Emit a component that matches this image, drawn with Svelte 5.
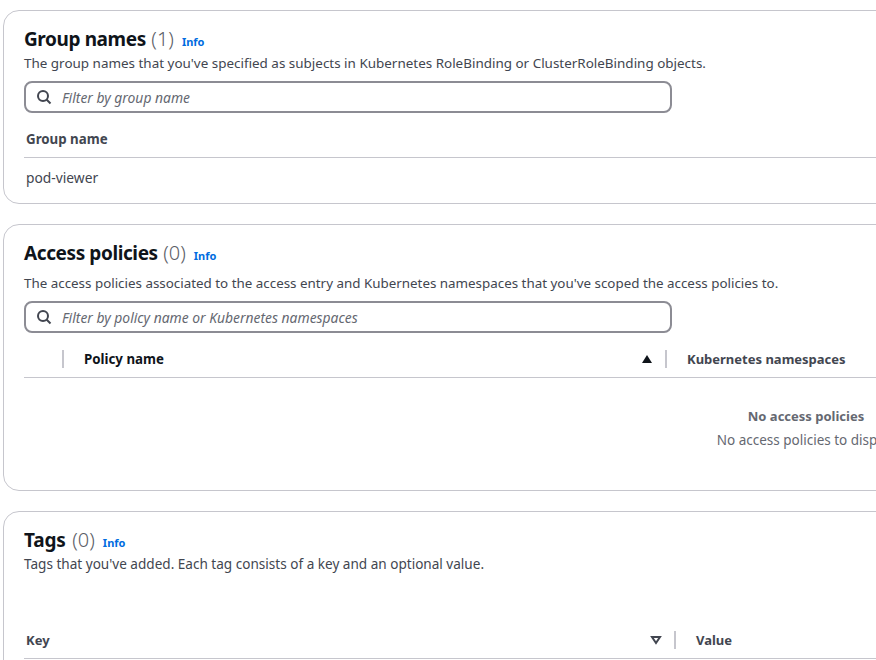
<script>
  const policyColumns = ["Policy name", "Kubernetes namespaces"];
</script>

{#snippet searchIcon()}
  <svg class="search-icon" viewBox="0 0 16 16" width="16" height="16" aria-hidden="true">
    <circle cx="7" cy="7" r="5" />
    <path d="m10.5 10.5 4 4" />
  </svg>
{/snippet}

{#snippet heading(title, count)}
  <div class="heading">
    <h2>{title} <span class="count">({count})</span></h2>
    <a href="#info" class="info">Info</a>
  </div>
{/snippet}

{#snippet filter(placeholder)}
  <div class="filter">
    {@render searchIcon()}
    <input type="text" {placeholder} />
  </div>
{/snippet}

<div class="page">
  <section class="card groups">
    {@render heading("Group names", 1)}
    <p class="desc">The group names that you've specified as subjects in Kubernetes RoleBinding or ClusterRoleBinding objects.</p>
    {@render filter("Filter by group name")}
    <div class="thead">
      <div class="th plain">Group name</div>
    </div>
    <div class="cell">pod-viewer</div>
  </section>

  <section class="card policies">
    {@render heading("Access policies", 0)}
    <p class="desc">The access policies associated to the access entry and Kubernetes namespaces that you've scoped the access policies to.</p>
    {@render filter("Filter by policy name or Kubernetes namespaces")}
    <div class="thead">
      <div class="select-col"></div>
      <div class="th policy-col">
        <span class="dark">{policyColumns[0]}</span>
        <svg class="sort" viewBox="0 0 12 10" width="12" height="10" aria-hidden="true"><path d="M6 1 11 9H1Z" /></svg>
      </div>
      <div class="th ns-col">{policyColumns[1]}</div>
    </div>
    <div class="empty">
      <strong>No access policies</strong>
      <span>No access policies to display</span>
    </div>
  </section>

  <section class="card tags">
    {@render heading("Tags", 0)}
    <p class="desc">Tags that you've added. Each tag consists of a key and an optional value.</p>
    <div class="thead spaced">
      <div class="th key-col">
        <span>Key</span>
        <svg class="sort open" viewBox="0 0 12 10" width="12" height="10" aria-hidden="true"><path d="M2 2h8L6 8Z" /></svg>
      </div>
      <div class="th value-col">Value</div>
    </div>
  </section>
</div>

<style>
  :global(body) {
    margin: 0;
    background: #fff;
  }
  .page {
    width: 876px;
    height: 660px;
    overflow: hidden;
    padding: 10px 0 0 3px;
    box-sizing: border-box;
    display: flex;
    flex-direction: column;
    gap: 20px;
    font-family: "Noto Sans", "Open Sans", sans-serif;
    font-size: 13px;
    color: #424650;
  }
  .card {
    flex: none;
    width: 1606px;
    box-sizing: border-box;
    border: 1px solid #c6c6cd;
    border-radius: 16px;
    padding: 14px 20px 0;
    background: #fff;
  }
  .groups { height: 194px; }
  .policies { height: 267px; }
  .tags { height: 300px; }
  .heading {
    display: flex;
    align-items: baseline;
    gap: 8px;
    height: 28px;
  }
  h2 {
    margin: 0;
    font-size: 19px;
    line-height: 28px;
    font-weight: 700;
    color: #0f141a;
    letter-spacing: -0.4px;
  }
  .tags h2 { letter-spacing: -0.2px; }
  .count {
    margin-left: 1px;
    font-size: 20px;
    font-weight: 300;
    letter-spacing: 0;
    color: #5b5e67;
  }
  .tags .count { margin-left: 2px; }
  .info {
    font-size: 11px;
    font-weight: 700;
    color: #006ce0;
    text-decoration: none;
  }
  .desc {
    margin: 0;
    font-size: 13.44px;
    line-height: 20px;
  }
  .policies .desc {
    margin-top: 6px;
    font-size: 13.39px;
  }
  .tags .desc { font-size: 13.57px; }
  .filter {
    display: flex;
    align-items: center;
    gap: 10px;
    width: 648px;
    height: 32px;
    margin-top: 8px;
    box-sizing: border-box;
    border: 2px solid #8c8c94;
    border-radius: 8px;
    padding: 0 10px;
  }
  .search-icon {
    flex: none;
    fill: none;
    stroke: #424650;
    stroke-width: 2;
  }
  input {
    flex: 1;
    min-width: 0;
    border: 0;
    outline: 0;
    padding: 1px 0 0;
    background: none;
    font: italic 13.88px "Noto Sans", "Open Sans", sans-serif;
  }
  input::placeholder {
    color: #656871;
    opacity: 1;
  }
  .thead {
    display: flex;
    align-items: center;
    height: 45px;
    padding-top: 8px;
    box-sizing: border-box;
    border-bottom: 1px solid #c6c6cd;
  }
  .thead.spaced { margin-top: 40px; }
  .th {
    font-weight: 700;
    color: #424650;
    display: flex;
    align-items: center;
    box-sizing: border-box;
    height: 18px;
  }
  .plain {
    padding-left: 2px;
    font-size: 13.3px;
  }
  .dark {
    color: #0f141a;
    font-size: 13.3px;
  }
  .select-col {
    width: 40px;
    height: 18px;
    box-sizing: border-box;
    border-right: 2px solid #c6c6cd;
  }
  .policy-col {
    width: 603px;
    padding: 0 12px 0 20px;
    justify-content: space-between;
    border-right: 2px solid #c6c6cd;
  }
  .ns-col { padding-left: 20px; }
  .key-col {
    width: 652px;
    padding: 0 12px 0 2px;
    justify-content: space-between;
    border-right: 2px solid #c6c6cd;
  }
  .value-col { padding-left: 20px; }
  .sort { fill: #0f141a; }
  .sort.open {
    fill: none;
    stroke: #424650;
    stroke-width: 2;
  }
  .cell {
    padding: 10px 2px;
    font-size: 13.8px;
    line-height: 20px;
  }
  .empty {
    display: flex;
    flex-direction: column;
    align-items: center;
    padding-top: 28px;
    line-height: 20px;
    gap: 4px;
    color: #656871;
  }
  .empty span { font-size: 13.5px; }
</style>
